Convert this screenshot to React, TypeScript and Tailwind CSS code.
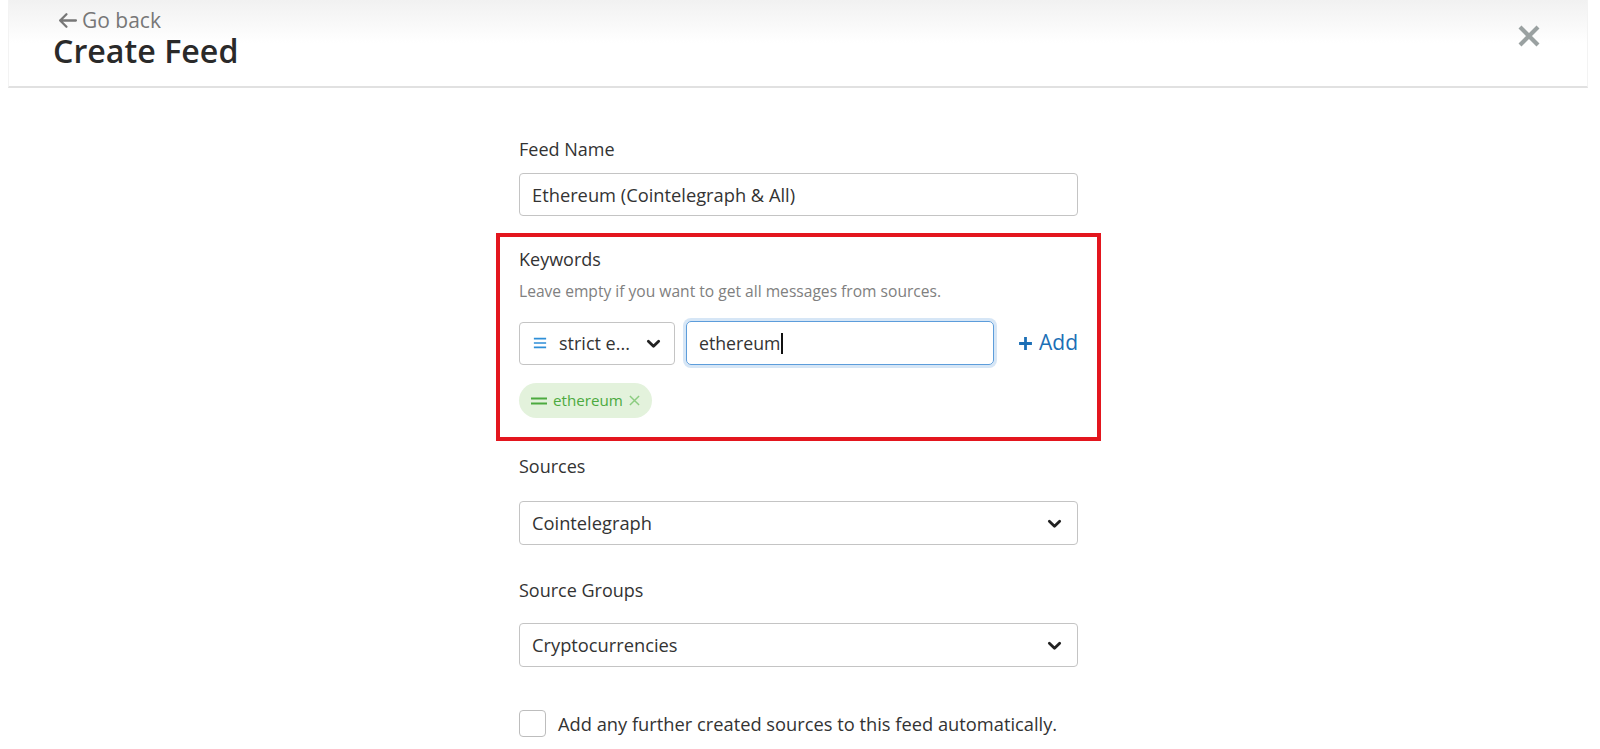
import React from "react";

const font = { fontFamily: '"Open Sans", "Noto Sans", sans-serif' };

function Chevron({ className = "" }: { className?: string }) {
  return (
    <svg viewBox="0 0 16 16" className={className} fill="none" stroke="currentColor" strokeWidth={3} strokeLinecap="round" strokeLinejoin="round">
      <path d="M2.5 5.5l5.5 5.5 5.5-5.5" />
    </svg>
  );
}

function SelectBox({ value }: { value: string }) {
  return (
    <div className="flex h-[44px] w-full items-center justify-between rounded-[4px] border border-[#c4c4c4] bg-white pl-[12px] pr-[15px]">
      <span className="text-[18.3px] text-[#333]">{value}</span>
      <Chevron className="h-[15px] w-[15px] text-[#222]" />
    </div>
  );
}

export default function App() {
  return (
    <div className="h-[749px] w-full overflow-hidden bg-white text-[#333]" style={font}>
      {/* cabeçalho */}
      <header className="ml-[8px] mr-[12px] h-[88px] border-x border-b-2 border-x-[#f3f3f3] border-b-[#e1e1e1] bg-gradient-to-b from-[#f1f1f1] via-white to-white">
        <div className="flex items-start justify-between pl-[44px] pr-[46px]">
          <div className="flex flex-col">
            <a className="mt-[8px] flex items-center gap-[4px] pl-[4px] text-[21px] leading-[24px] text-[#777]">
              <svg viewBox="0 0 20 20" className="h-[21px] w-[21px]" fill="none" stroke="currentColor" strokeWidth={2.2} strokeLinecap="round" strokeLinejoin="round">
                <path d="M18 10H3M9 4l-6 6 6 6" />
              </svg>
              Go back
            </a>
            <h1 className="mt-[2px] text-[32.2px] font-semibold leading-[34px] text-[#2a2a2a]">Create Feed</h1>
          </div>
          <svg viewBox="0 0 24 24" className="mt-[24px] h-[24px] w-[24px] text-[#9aa1a1]" fill="none" stroke="currentColor" strokeWidth={4.2}>
            <path d="M3 3l18 18M21 3L3 21" />
          </svg>
        </div>
      </header>

      {/* formulário */}
      <main className="ml-[519px] w-[559px] pt-[49px]">
        <label className="block text-[18px] leading-[24px]">Feed Name</label>
        <div className="mt-[12px] flex h-[43px] items-center rounded-[4px] border border-[#c4c4c4] px-[12px] text-[18.3px]">
          Ethereum (Cointelegraph &amp; All)
        </div>

        <section className="-mx-[23px] mt-[17px] border-4 border-[#e3161e] px-[19px] pb-[19px] pt-[10px]">
          <label className="block text-[18px] leading-[24px]">Keywords</label>
          <p className="mt-[10px] text-[15.6px] leading-[20px] text-[#808080]">Leave empty if you want to get all messages from sources.</p>
          <div className="mt-[20px] flex items-center">
            <div className="flex h-[43px] w-[156px] items-center justify-between rounded-[4px] border border-[#c4c4c4] pl-[12px] pr-[13px]">
              <div className="flex items-center gap-[11px]">
                <svg viewBox="0 0 16 16" className="h-[14px] w-[16px] text-[#2f8fd8]" fill="none" stroke="currentColor" strokeWidth={1.8}>
                  <path d="M1 3h14M1 8h14M1 13h14" />
                </svg>
                <span className="text-[18px]">strict e...</span>
              </div>
              <Chevron className="h-[15px] w-[15px] text-[#222]" />
            </div>
            <div className="ml-[11px] flex h-[44px] w-[308px] items-center rounded-[5px] border border-[#5d9ddb] px-[12px] text-[17.7px] shadow-[0_0_0_3px_rgba(93,157,219,0.25)]">
              ethereum<span className="ml-[1px] inline-block h-[21px] w-[1.5px] bg-[#111]" />
            </div>
            <button className="ml-auto flex items-center gap-[6px] text-[21px] text-[#1c6fb6]">
              <svg viewBox="0 0 14 14" className="h-[15px] w-[15px]" fill="none" stroke="currentColor" strokeWidth={2.6}>
                <path d="M7 1v12M1 7h12" />
              </svg>
              Add
            </button>
          </div>
          <div className="mt-[18px] inline-flex h-[35px] items-center gap-[6px] rounded-full bg-[#e3f2dc] pl-[12px] pr-[12px] text-[15.2px] text-[#4caa3f]">
            <svg viewBox="0 0 16 10" className="h-[10px] w-[16px]" fill="none" stroke="currentColor" strokeWidth={2.2}>
              <path d="M0 2.5h16M0 7.5h16" />
            </svg>
            ethereum
            <svg viewBox="0 0 12 12" className="h-[11px] w-[11px] text-[#8ccc80]" fill="none" stroke="currentColor" strokeWidth={1.6}>
              <path d="M1 1l10 10M11 1L1 11" />
            </svg>
          </div>
        </section>

        <label className="mt-[13px] block text-[18px] leading-[24px]">Sources</label>
        <div className="mt-[23px]">
          <SelectBox value="Cointelegraph" />
        </div>

        <label className="mt-[33px] block text-[18px] leading-[24px]">Source Groups</label>
        <div className="mt-[21px]">
          <SelectBox value="Cryptocurrencies" />
        </div>

        <label className="mt-[43px] flex items-center gap-[12px]">
          <span className="h-[27px] w-[27px] rounded-[4px] border border-[#bdbdbd] bg-white" />
          <span className="text-[18.3px]">Add any further created sources to this feed automatically.</span>
        </label>
      </main>
    </div>
  );
}
